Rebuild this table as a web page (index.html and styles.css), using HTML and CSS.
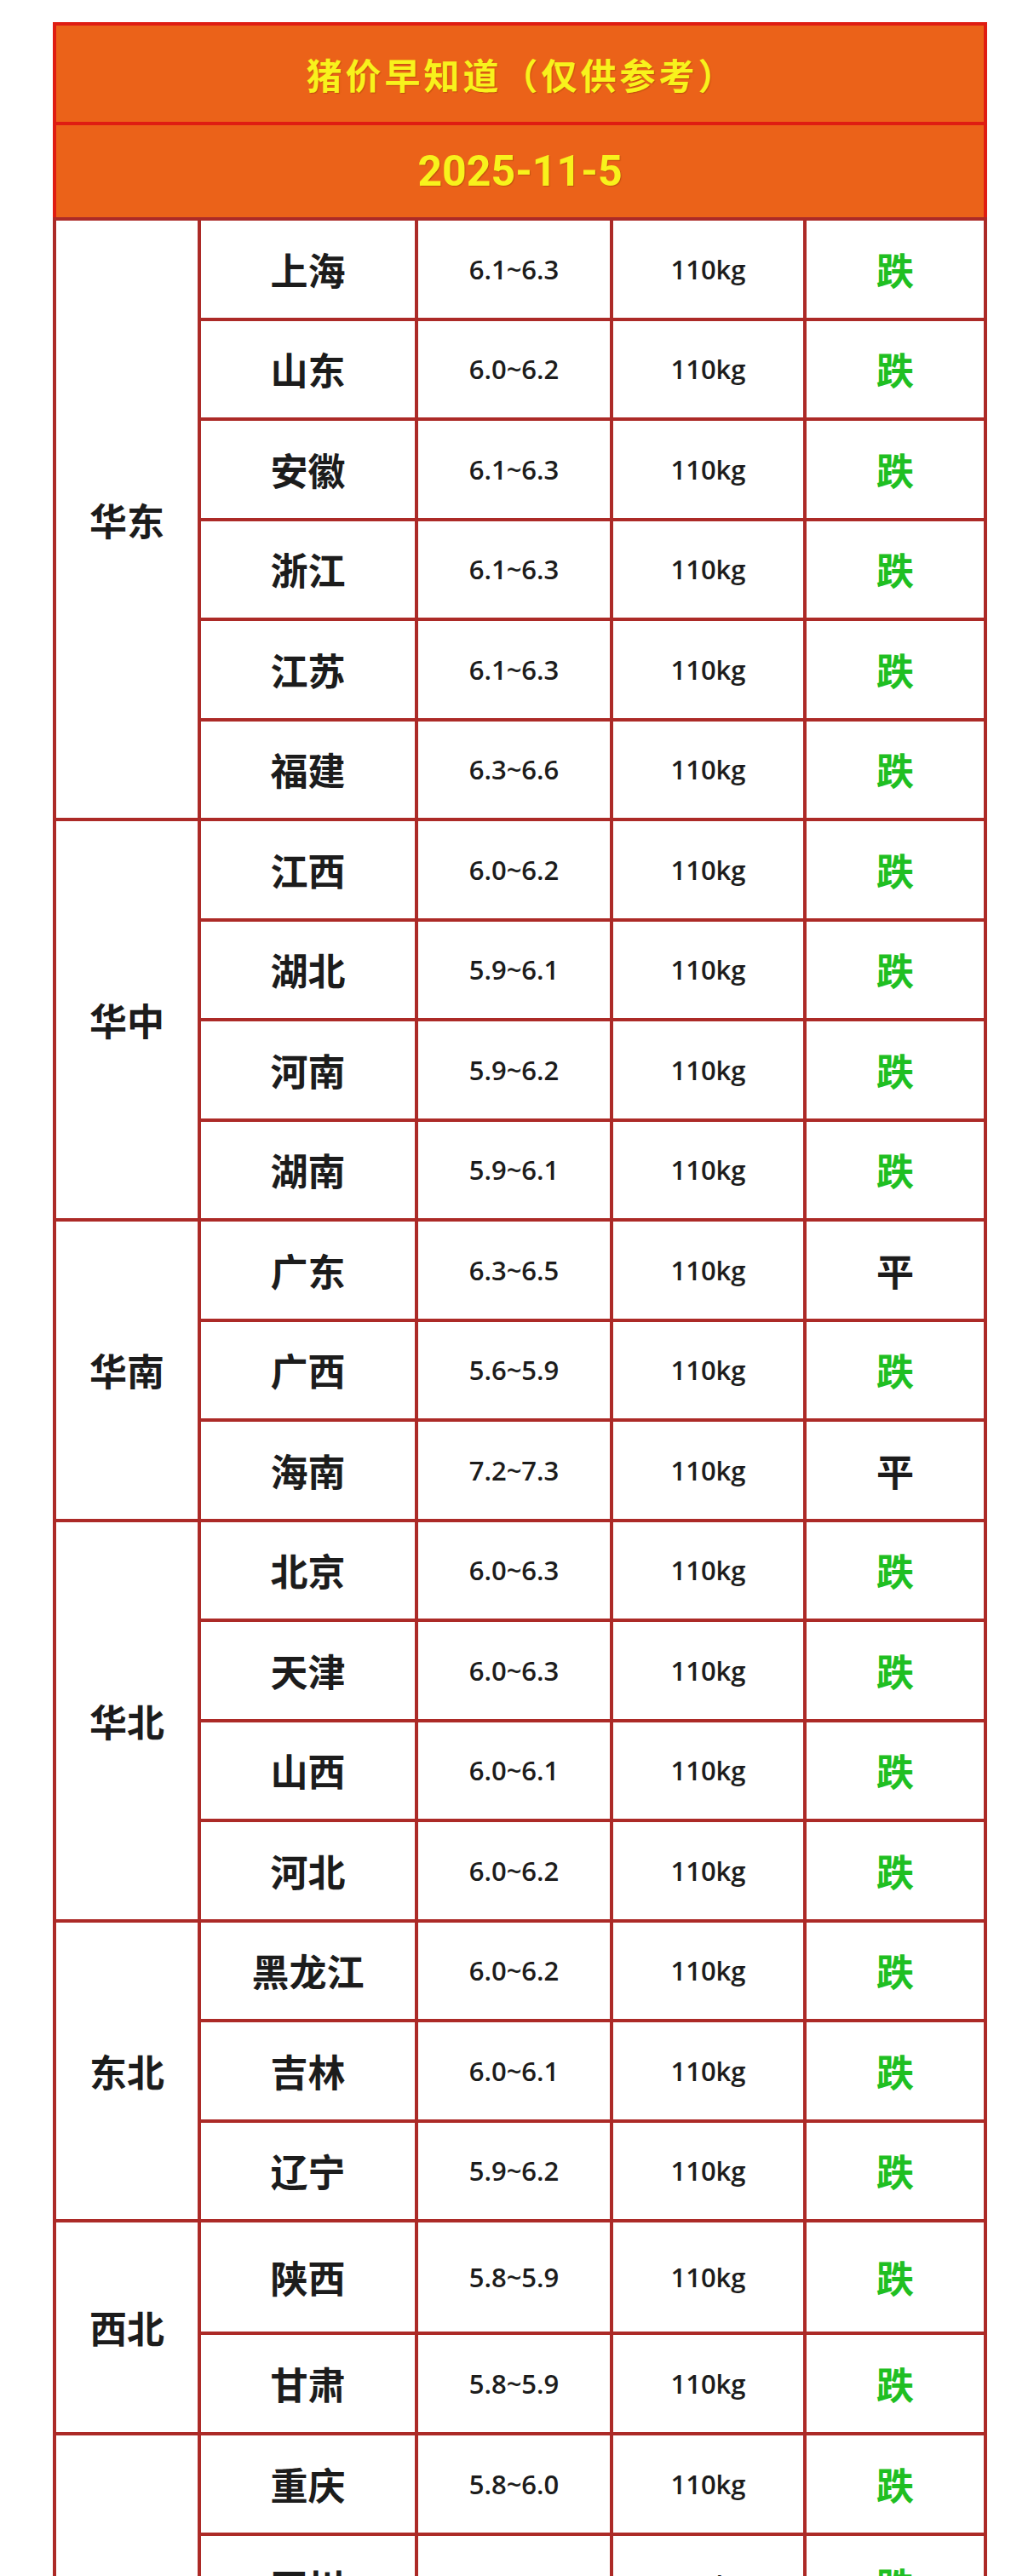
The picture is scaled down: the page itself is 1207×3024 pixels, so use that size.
FILE: index.html
```html
<!DOCTYPE html>
<html lang="zh-CN">
<head>
<meta charset="utf-8">
<title>猪价早知道</title>
<link rel="stylesheet" href="styles.css">
</head>
<body>
<div class="page">
  <div class="sheet">
    <div class="head">
      <div class="title">猪价早知道（仅供参考）</div>
      <div class="date">2025-11-5</div>
    </div>
    <div class="body">
      <div class="region r6">华东</div>
      <div class="prov">上海</div><div class="num">6.1~6.3</div><div class="wt">110kg</div><div class="trend down">跌</div>
      <div class="prov">山东</div><div class="num">6.0~6.2</div><div class="wt">110kg</div><div class="trend down">跌</div>
      <div class="prov">安徽</div><div class="num">6.1~6.3</div><div class="wt">110kg</div><div class="trend down">跌</div>
      <div class="prov">浙江</div><div class="num">6.1~6.3</div><div class="wt">110kg</div><div class="trend down">跌</div>
      <div class="prov">江苏</div><div class="num">6.1~6.3</div><div class="wt">110kg</div><div class="trend down">跌</div>
      <div class="prov">福建</div><div class="num">6.3~6.6</div><div class="wt">110kg</div><div class="trend down">跌</div>

      <div class="region r4">华中</div>
      <div class="prov">江西</div><div class="num">6.0~6.2</div><div class="wt">110kg</div><div class="trend down">跌</div>
      <div class="prov">湖北</div><div class="num">5.9~6.1</div><div class="wt">110kg</div><div class="trend down">跌</div>
      <div class="prov">河南</div><div class="num">5.9~6.2</div><div class="wt">110kg</div><div class="trend down">跌</div>
      <div class="prov">湖南</div><div class="num">5.9~6.1</div><div class="wt">110kg</div><div class="trend down">跌</div>

      <div class="region r3">华南</div>
      <div class="prov">广东</div><div class="num">6.3~6.5</div><div class="wt">110kg</div><div class="trend flat">平</div>
      <div class="prov">广西</div><div class="num">5.6~5.9</div><div class="wt">110kg</div><div class="trend down">跌</div>
      <div class="prov">海南</div><div class="num">7.2~7.3</div><div class="wt">110kg</div><div class="trend flat">平</div>

      <div class="region r4">华北</div>
      <div class="prov">北京</div><div class="num">6.0~6.3</div><div class="wt">110kg</div><div class="trend down">跌</div>
      <div class="prov">天津</div><div class="num">6.0~6.3</div><div class="wt">110kg</div><div class="trend down">跌</div>
      <div class="prov">山西</div><div class="num">6.0~6.1</div><div class="wt">110kg</div><div class="trend down">跌</div>
      <div class="prov">河北</div><div class="num">6.0~6.2</div><div class="wt">110kg</div><div class="trend down">跌</div>

      <div class="region r3">东北</div>
      <div class="prov">黑龙江</div><div class="num">6.0~6.2</div><div class="wt">110kg</div><div class="trend down">跌</div>
      <div class="prov">吉林</div><div class="num">6.0~6.1</div><div class="wt">110kg</div><div class="trend down">跌</div>
      <div class="prov">辽宁</div><div class="num">5.9~6.2</div><div class="wt">110kg</div><div class="trend down">跌</div>

      <div class="region r2">西北</div>
      <div class="prov">陕西</div><div class="num">5.8~5.9</div><div class="wt">110kg</div><div class="trend down">跌</div>
      <div class="prov">甘肃</div><div class="num">5.8~5.9</div><div class="wt">110kg</div><div class="trend down">跌</div>

      <div class="region r4">西南</div>
      <div class="prov">重庆</div><div class="num">5.8~6.0</div><div class="wt">110kg</div><div class="trend down">跌</div>
      <div class="prov">四川</div><div class="num">5.8~6.0</div><div class="wt">110kg</div><div class="trend down">跌</div>
      <div class="prov">云南</div><div class="num">5.8~6.0</div><div class="wt">110kg</div><div class="trend down">跌</div>
      <div class="prov">贵州</div><div class="num">5.8~6.0</div><div class="wt">110kg</div><div class="trend down">跌</div>
    </div>
  </div>
</div>
</body>
</html>
```

FILE: styles.css
```css
html, body {
  margin: 0;
  padding: 0;
  background: #ffffff;
}

.page {
  padding: 26px 0 0 62px;
}

.sheet {
  width: 1097px;
}

.head {
  background: #df1d12;
  padding: 4px 4px 0 4px;
  display: grid;
  grid-template-rows: 113px 108px;
  row-gap: 4px;
}

.title,
.date {
  background: #eb6219;
  color: #f8f21c;
  display: flex;
  align-items: center;
  justify-content: center;
  text-shadow: 1px 1px 1px rgba(140, 60, 0, 0.45);
}

.title {
  font-family: "Noto Sans CJK SC", "Noto Sans", sans-serif;
  font-weight: 700;
  font-size: 42px;
  letter-spacing: 4px;
  padding-left: 4px;
}

.date {
  font-family: Roboto, "Noto Sans", sans-serif;
  font-weight: 700;
  font-size: 50px;
}

.body {
  background: #ac2a27;
  padding: 4px;
  display: grid;
  grid-template-columns: 166px 251px 225px 223px 208px;
  grid-template-rows: repeat(20, 113.5px) 128px 113.5px repeat(4, 114px);
  gap: 4px;
}

.body > div {
  background: #ffffff;
  display: flex;
  align-items: center;
  justify-content: center;
  color: #1c1c1c;
}

.region,
.prov,
.trend {
  font-family: "Noto Sans CJK SC", "Noto Sans", sans-serif;
  font-weight: 700;
  font-size: 44px;
}

.region {
  grid-column: 1;
}

.r2 { grid-row: span 2; }
.r3 { grid-row: span 3; }
.r4 { grid-row: span 4; }
.r6 { grid-row: span 6; }

.num,
.wt {
  font-family: "Open Sans", "Noto Sans", sans-serif;
  font-weight: 600;
  font-size: 31px;
}

.trend.down {
  color: #1fbf22;
}

.trend.flat {
  color: #1c1c1c;
}
```
